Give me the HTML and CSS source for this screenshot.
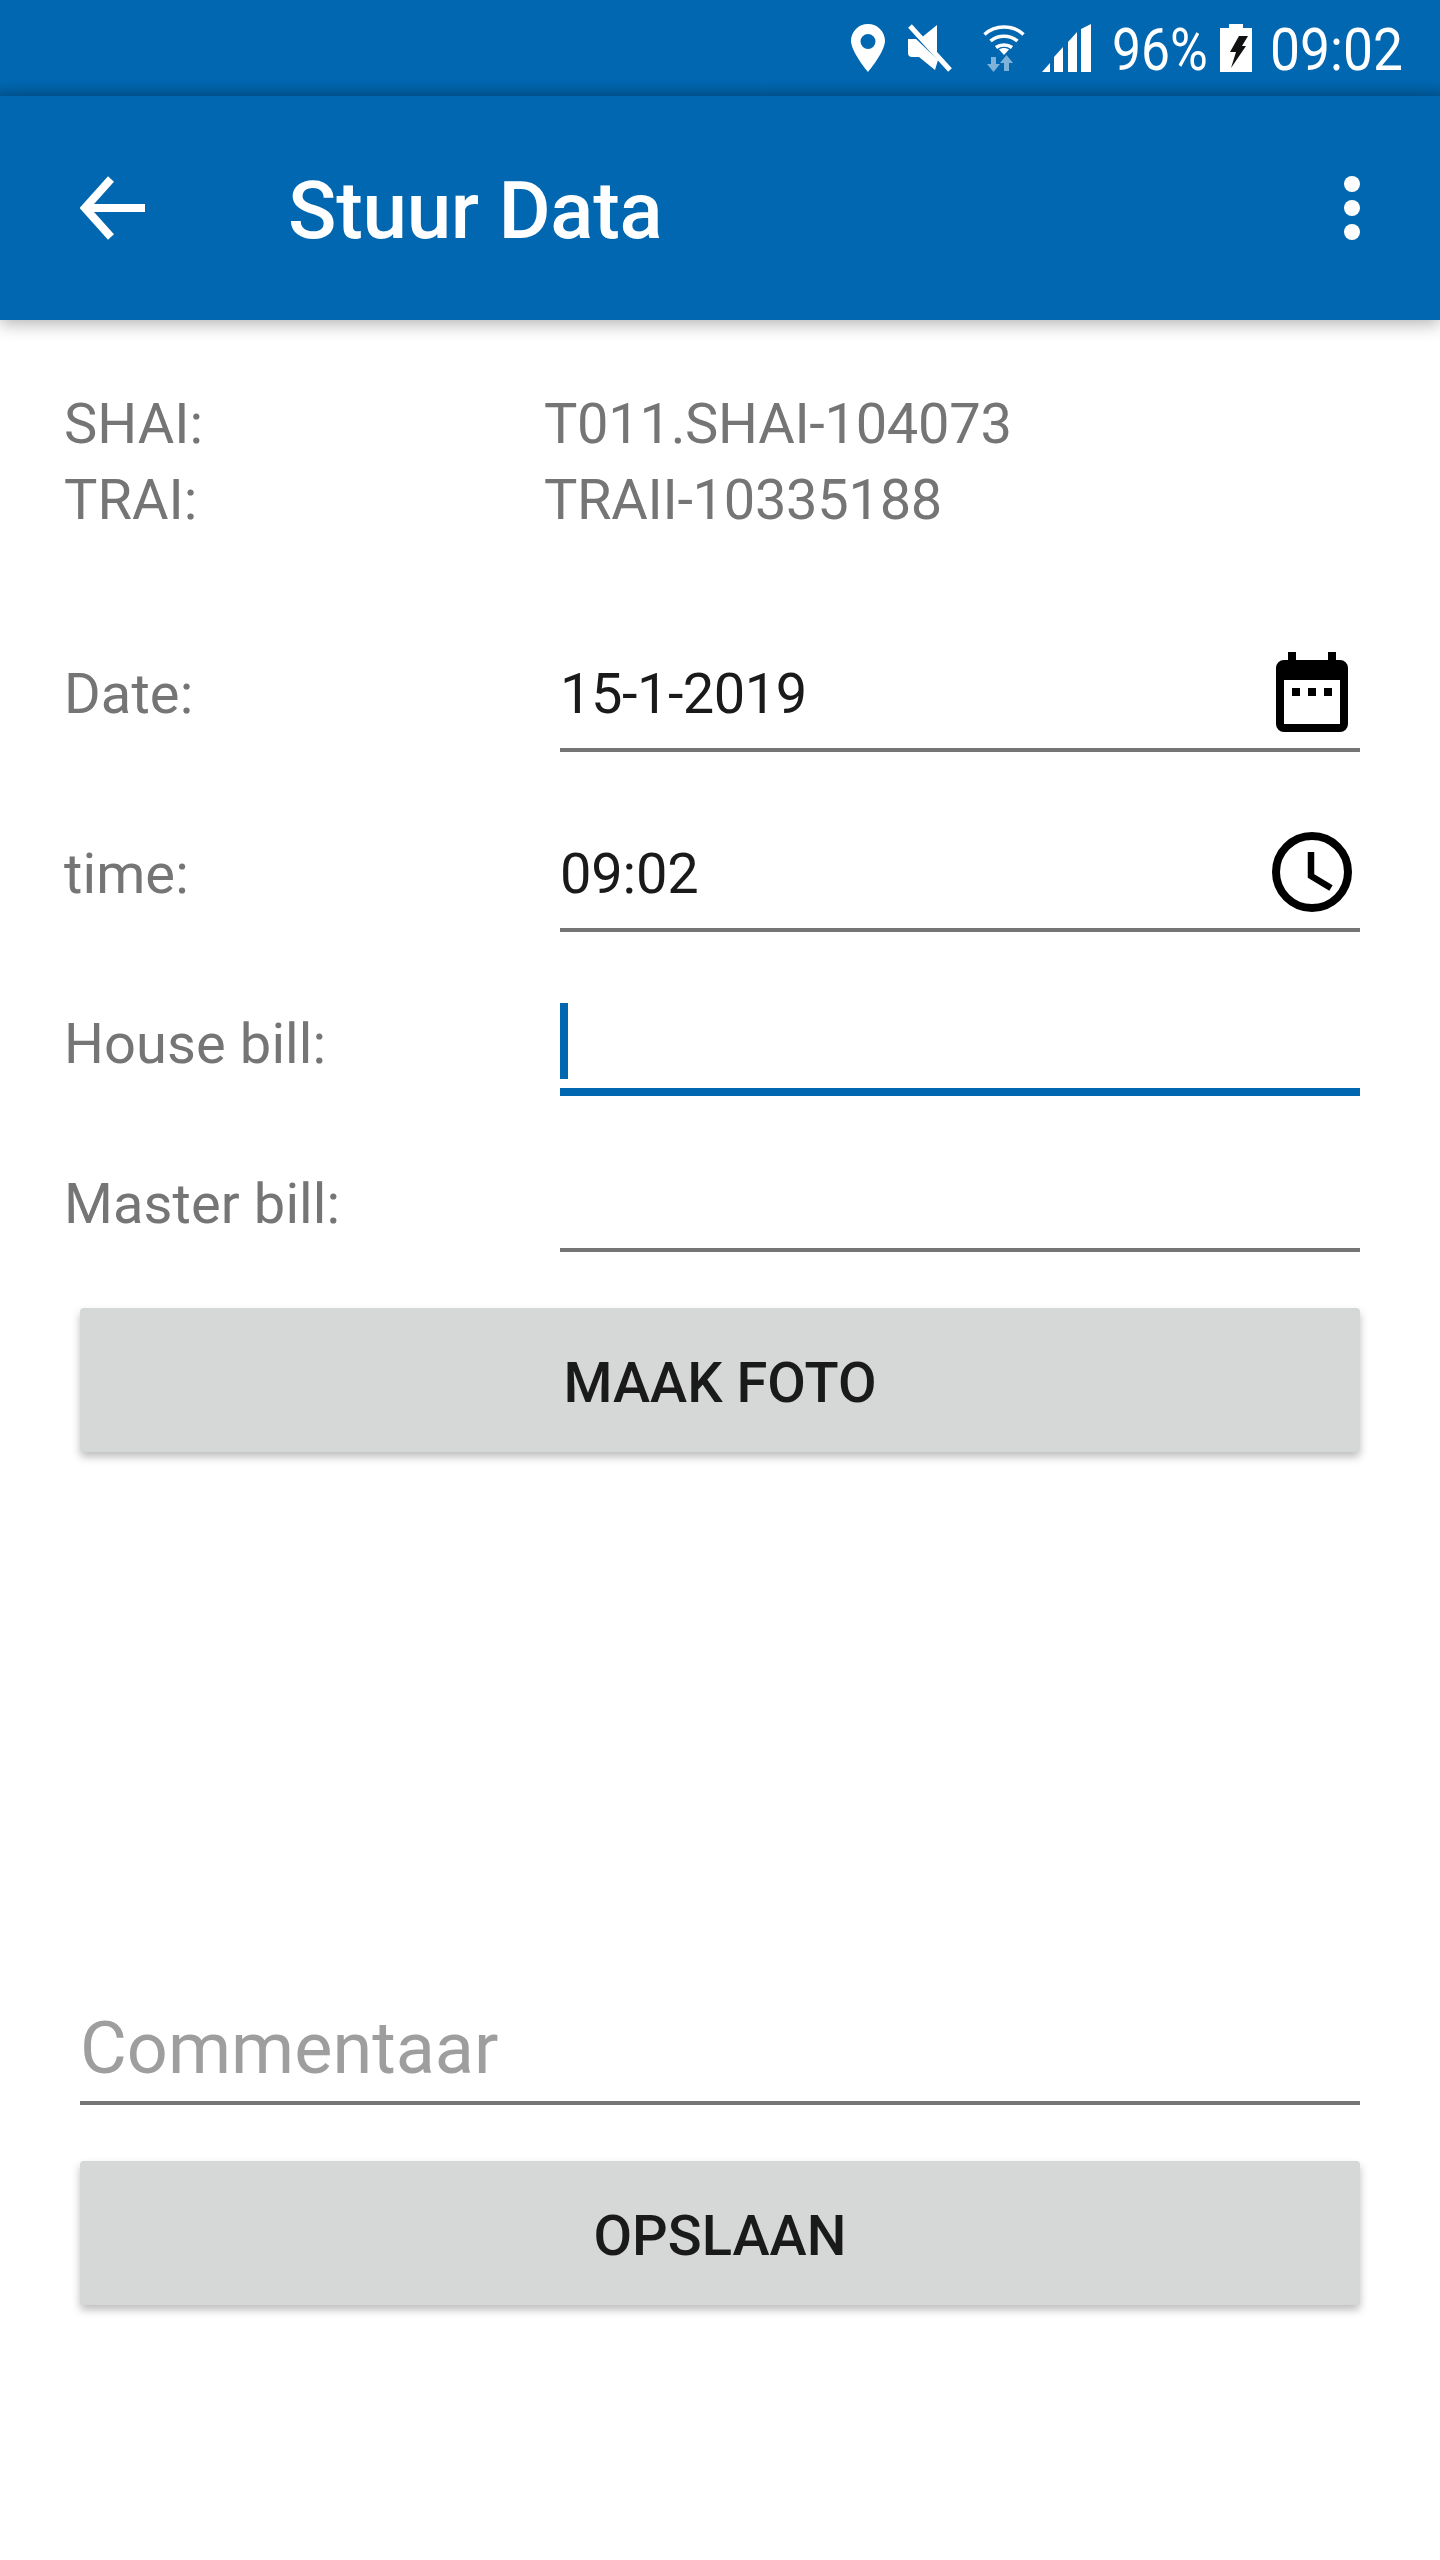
FILE: index.html
```html
<!DOCTYPE html>
<html lang="nl">
<head>
<meta charset="utf-8">
<title>Stuur Data</title>
<link rel="stylesheet" href="styles.css">
</head>
<body>
<div class="phone">
  <div class="statusbar">
    <svg class="ic-pin" viewBox="0 0 34 48"><path fill="#fff" fill-rule="evenodd" d="M17 0C7.6 0 0 7.5 0 16.800 0 28 17 48 17 48s17-20 17-31.200C34 7.500 26.400 0 17 0zm0 10a7.500 7.500 0 1 1 0 15 7.500 7.500 0 0 1 0-15z"/></svg>
    <svg class="ic-mute" viewBox="0 0 44 48"><path fill="#fff" d="M0 15h8L30 36 27 46 11 33H4c-2.500 0-4-1.500-4-4zM13 14 29 1v30z"/><path stroke="#fff" stroke-width="5" d="M2 2l40 44"/></svg>
    <svg class="ic-wifi" viewBox="0 0 42 49"><g fill="none" stroke="#fff" stroke-width="3.500"><path d="M1.500 11.500C12 1.500 30 1.500 40.500 11.500"/><path d="M7.500 18c7.500-6.500 19.500-6.500 27 0"/><path d="M13 24.500c4.500-3.500 11.500-3.500 16 0"/></g><path fill="#fff" d="M21 32l-5-5.500c3-2 7-2 10 0z"/><path fill="#7fb2d8" d="M8 34h5v7h4l-6.500 8L4 41h4zM21 40h-4l6.500-8 6.500 8h-4v8h-5z"/></svg>
    <svg class="ic-signal" viewBox="0 0 49 48"><path fill="#fff" d="M0 48l8-9v9zM12 48V33l9-10v25zM26 48V18l9-10v40zM39 48V5l10-5v48z"/></svg>
    <span class="st-text st-pct">96%</span>
    <svg class="ic-batt" viewBox="0 0 32 48"><path fill="#fff" d="M9 0h14v4h9v44H0V4h9z"/><path fill="#111" d="M19 12h9l-6 10h4L11 44l5-16h-6z"/></svg>
    <span class="st-text st-time">09:02</span>
  </div>

  <header class="appbar">
    <svg class="ic-back" viewBox="0 0 65 64"><path fill="none" stroke="#fff" stroke-width="8" d="M65 32H6M31 3 5 32l26 29"/></svg>
    <h1 class="title">Stuur Data</h1>
    <div class="menu"><i></i><i></i><i></i></div>
  </header>

  <section class="info">
    <div class="info-row"><span class="info-key">SHAI:</span><span>T011.SHAI-104073</span></div>
    <div class="info-row"><span class="info-key">TRAI:</span><span>TRAII-10335188</span></div>
  </section>

  <div class="row row-date">
    <span class="label">Date:</span>
    <div class="field"><span class="value value-date">15-1-2019</span>
      <svg class="ic-cal" viewBox="0 0 72 80"><path d="M12 0h8v8h32V0h8v8h4a8 8 0 0 1 8 8v56a8 8 0 0 1-8 8H8a8 8 0 0 1-8-8V16a8 8 0 0 1 8-8h4zM8 28v44h56V28zM16 36h8v8h-8zM32 36h8v8h-8zM48 36h8v8h-8z" fill-rule="evenodd"/></svg>
    </div>
  </div>
  <div class="row row-time">
    <span class="label">time:</span>
    <div class="field"><span class="value">09:02</span>
      <svg class="ic-clock" viewBox="0 0 80 80"><circle cx="40" cy="40" r="36" fill="none" stroke="#000" stroke-width="8"/><path d="M39 20v24l20 12" fill="none" stroke="#000" stroke-width="6.500"/></svg>
    </div>
  </div>
  <div class="row row-house">
    <span class="label">House bill:</span>
    <div class="field field-focus"><span class="caret"></span></div>
  </div>
  <div class="row row-master">
    <span class="label">Master bill:</span>
    <div class="field"></div>
  </div>

  <div class="actions">
    <button class="btn btn-foto">MAAK FOTO</button>
    <div class="comment">Commentaar</div>
    <button class="btn btn-save">OPSLAAN</button>
  </div>
</div>
</body>
</html>
```

FILE: styles.css
```css
* { box-sizing: border-box; }
html, body { margin: 0; background: #fff; }
.phone { width: 1440px; height: 2560px; overflow: hidden; font-family: Roboto, sans-serif; background: #fff; }

.statusbar {
  height: 96px;
  background: linear-gradient(to bottom, #0067b0 0, #0067b0 82px, #005a9a 96px);
  display: flex;
  align-items: flex-start;
  padding: 24px 40px 0 851px;
  color: #fff;
}
.statusbar svg { display: block; flex: none; }
.ic-pin { width: 34px; height: 48px; }
.ic-mute { width: 44px; height: 48px; margin-left: 23px; }
.ic-wifi { width: 42px; height: 49px; margin-left: 31px; margin-top: -1px; }
.ic-signal { width: 49px; height: 48px; margin-left: 17px; }
.ic-batt { width: 32px; height: 48px; margin-left: 14px; }
.st-text { font-size: 60px; font-weight: 400; line-height: 48px; white-space: nowrap; display: block; transform-origin: left center; }
.st-pct { width: 94px; margin-left: 21px; margin-top: 2px; transform: scaleX(.86); }
.st-time { width: 127px; margin-left: 18px; margin-top: 2px; transform: scaleX(.89); }

.appbar {
  height: 224px;
  background: #0067b0;
  box-shadow: 0 4px 16px rgba(0, 0, 0, .3);
  position: relative;
  display: flex;
  align-items: center;
  padding: 0 80px;
}
.ic-back { width: 65px; height: 64px; flex: none; display: block; }
.title { margin: 6px 0 0 143px; font-size: 80px; font-weight: 500; color: #fff; line-height: 94px; flex: 1; letter-spacing: -.3px; }
.menu { display: flex; flex-direction: column; gap: 8px; }
.menu i { display: block; width: 16px; height: 16px; border-radius: 50%; background: #fff; }

.info { padding: 66px 0 0 64px; font-size: 56px; color: #757575; letter-spacing: -.3px; }
.info-row { display: flex; line-height: 76px; height: 76px; }
.info-key { width: 480px; letter-spacing: 0; }

.row { display: flex; align-items: flex-start; padding: 0 80px 0 64px; height: 112px; }
.row-date { margin-top: 102px; }
.row-time { margin-top: 68px; }
.row-house { margin-top: 52px; }
.row-master { margin-top: 44px; }
.label { width: 496px; flex: none; font-size: 56px; color: #757575; line-height: 76px; letter-spacing: .1px; }
.row-date .label { margin-top: 16px; }
.row-time .label { margin-top: 16px; }
.row-house .label { margin-top: 22px; }
.row-master .label { margin-top: 26px; }
.field { flex: 1; height: 112px; display: flex; align-items: center; justify-content: space-between; border-bottom: 4px solid #757575; }
.value { font-size: 56px; color: #1a1a1a; line-height: 76px; letter-spacing: -.2px; }
.value-date { letter-spacing: -.5px; }
.field-focus { border-bottom: 8px solid #0067b0; align-items: flex-start; padding-top: 19px; }
.caret { display: block; width: 8px; height: 76px; background: #0067b0; }
.ic-cal { width: 72px; height: 80px; margin-right: 12px; margin-top: -4px; flex: none; }
.ic-clock { width: 80px; height: 80px; margin-right: 8px; margin-top: -4px; flex: none; }

.actions { padding: 56px 80px 0; display: flex; flex-direction: column; }
.btn {
  display: block;
  width: 100%;
  height: 144px;
  border: 0;
  border-radius: 4px;
  background: #d6d7d7;
  color: #1a1a1a;
  font-family: inherit;
  font-size: 56px;
  font-weight: 500;
  padding: 5px 0 0;
  box-shadow: 0 5px 9px rgba(0, 0, 0, .26);
}
.comment { margin-top: 548px; height: 105px; font-size: 72px; color: #9e9e9e; line-height: 98px; border-bottom: 4px solid #757575; }
.btn-save { margin-top: 56px; }
```
